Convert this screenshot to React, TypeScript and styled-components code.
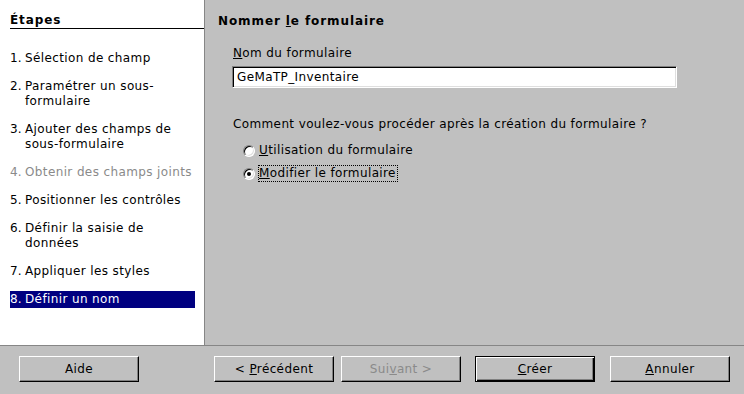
import React from "react";
import styled, { createGlobalStyle } from "styled-components";

const GlobalStyle = createGlobalStyle`
  html, body {
    margin: 0;
    padding: 0;
    background: #c0c0c0;
  }
  body {
    font-family: "DejaVu Sans", "Liberation Sans", sans-serif;
    font-size: 12px;
    letter-spacing: 0.38px;
    color: #000;
  }
`;

const steps = [
  { n: "1.", label: "Sélection de champ" },
  { n: "2.", label: "Paramétrer un sous-formulaire" },
  { n: "3.", label: "Ajouter des champs de sous-formulaire" },
  { n: "4.", label: "Obtenir des champs joints", disabled: true },
  { n: "5.", label: "Positionner les contrôles" },
  { n: "6.", label: "Définir la saisie de données" },
  { n: "7.", label: "Appliquer les styles" },
  { n: "8.", label: "Définir un nom", active: true },
];

export default function App() {
  return (
    <>
      <GlobalStyle />
      <Dialog>
        <Body>
          <Sidebar>
            <SidebarTitle>Étapes</SidebarTitle>
            <StepList>
              {steps.map((s) => (
                <Step key={s.n} $active={s.active} $disabled={s.disabled}>
                  <StepNum>{s.n}</StepNum>
                  <span>{s.label}</span>
                </Step>
              ))}
            </StepList>
          </Sidebar>

          <Page>
            <PageTitle>
              Nommer <Key>l</Key>e formulaire
            </PageTitle>
            <Content>
              <FieldLabel>
                <Key>N</Key>om du formulaire
              </FieldLabel>
              <TextInput defaultValue="GeMaTP_Inventaire" />
              <Question>
                Comment voulez-vous procéder après la création du formulaire ?
              </Question>
              <RadioGroup>
                <RadioRow>
                  <Radio />
                  <RadioLabel>
                    <Key>U</Key>tilisation du formulaire
                  </RadioLabel>
                </RadioRow>
                <RadioRow>
                  <Radio $checked />
                  <RadioLabel $focused>
                    <Key>M</Key>odifier le formulaire
                  </RadioLabel>
                </RadioRow>
              </RadioGroup>
            </Content>
          </Page>
        </Body>

        <ButtonBar>
          <Button>Aide</Button>
          <Spacer />
          <Button>
            &lt; <Key>P</Key>récédent
          </Button>
          <Button $disabled $gap={7}>
            Sui<Key>v</Key>ant &gt;
          </Button>
          <Button $default $gap={14}>
            <Key>C</Key>réer
          </Button>
          <Button $gap={15}>
            <Key>A</Key>nnuler
          </Button>
        </ButtonBar>
      </Dialog>
    </>
  );
}

const Dialog = styled.div`
  width: 744px;
  height: 394px;
  display: flex;
  flex-direction: column;
  background: #c0c0c0;
  overflow: hidden;
`;

const Body = styled.div`
  display: flex;
  height: 345px;
  border-bottom: 1px solid #868686;
`;

const Sidebar = styled.div`
  width: 194px;
  background: #fff;
  border-right: 1px solid #868686;
  padding: 13px 0 0 10px;
`;

const SidebarTitle = styled.div`
  font-weight: bold;
  letter-spacing: 0.9px;
  line-height: 15px;
  border-bottom: 1px solid #000;
`;

const StepList = styled.div`
  display: flex;
  flex-direction: column;
  gap: 11px;
  margin: 21px 9px 0 0;
`;

const Step = styled.div<{ $active?: boolean; $disabled?: boolean }>`
  display: flex;
  line-height: 15px;
  padding: 1px 0;
  background: ${(p) => (p.$active ? "#000080" : "transparent")};
  color: ${(p) => (p.$active ? "#fff" : p.$disabled ? "#8a8a8a" : "#000")};
`;

const StepNum = styled.span`
  flex: 0 0 15px;
  letter-spacing: 0;
`;

const Page = styled.div`
  flex: 1;
  padding: 14px 0 0 13px;
`;

const PageTitle = styled.div`
  font-weight: bold;
  letter-spacing: 0.9px;
  line-height: 15px;
`;

const Key = styled.span`
  text-decoration: underline;
`;

const Content = styled.div`
  display: flex;
  flex-direction: column;
  margin: 17px 0 0 14px;
`;

const FieldLabel = styled.div`
  line-height: 15px;
  padding-left: 1px;
`;

const TextInput = styled.input`
  box-sizing: border-box;
  width: 445px;
  height: 22px;
  margin-top: 5px;
  padding: 0 4px;
  font: inherit;
  letter-spacing: inherit;
  color: #000;
  background: #fff;
  border: 1px solid;
  border-color: #808080 #fff #fff #808080;
  box-shadow: inset 1px 1px #000, inset -1px -1px #dfdfdf;
  outline: none;
`;

const Question = styled.div`
  line-height: 15px;
  margin-top: 29px;
  padding-left: 1px;
`;

const RadioGroup = styled.div`
  display: flex;
  flex-direction: column;
  margin-top: 7px;
  padding-left: 11px;
`;

const RadioRow = styled.div`
  display: flex;
  align-items: center;
  height: 23px;
`;

const Radio = styled.span<{ $checked?: boolean }>`
  position: relative;
  box-sizing: border-box;
  width: 12px;
  height: 12px;
  border-radius: 50%;
  background: #fff;
  border: 1px solid;
  border-color: #808080 #fff #fff #808080;
  box-shadow: inset 1px 1px #000, inset -1px -1px #dfdfdf;
  margin-right: 3px;

  &::after {
    content: "";
    display: ${(p) => (p.$checked ? "block" : "none")};
    position: absolute;
    left: 3px;
    top: 3px;
    width: 4px;
    height: 4px;
    border-radius: 50%;
    background: #000;
  }
`;

const RadioLabel = styled.span<{ $focused?: boolean }>`
  line-height: 15px;
  border: 1px dotted ${(p) => (p.$focused ? "#000" : "transparent")};
  padding: 0 1px 0 0;
`;

const ButtonBar = styled.div`
  display: flex;
  align-items: flex-start;
  flex: 1;
  padding: 10px 14px 0 19px;
`;

const Spacer = styled.div`
  flex: 1;
`;

const Button = styled.button<{ $default?: boolean; $disabled?: boolean; $gap?: number }>`
  box-sizing: border-box;
  width: 120px;
  height: 26px;
  margin-left: ${(p) => p.$gap ?? 0}px;
  padding: 0;
  font: inherit;
  letter-spacing: inherit;
  background: #c0c0c0;
  color: ${(p) => (p.$disabled ? "#8a8a8a" : "#000")};
  border: 1px solid;
  border-color: ${(p) => (p.$default ? "#000" : "#fff #000 #000 #fff")};
  box-shadow: ${(p) =>
    p.$default
      ? "inset 1px 1px #fff, inset -1px -1px #000, inset -2px -2px #808080"
      : "inset -1px -1px #808080"};
  text-align: center;
  cursor: default;
`;
